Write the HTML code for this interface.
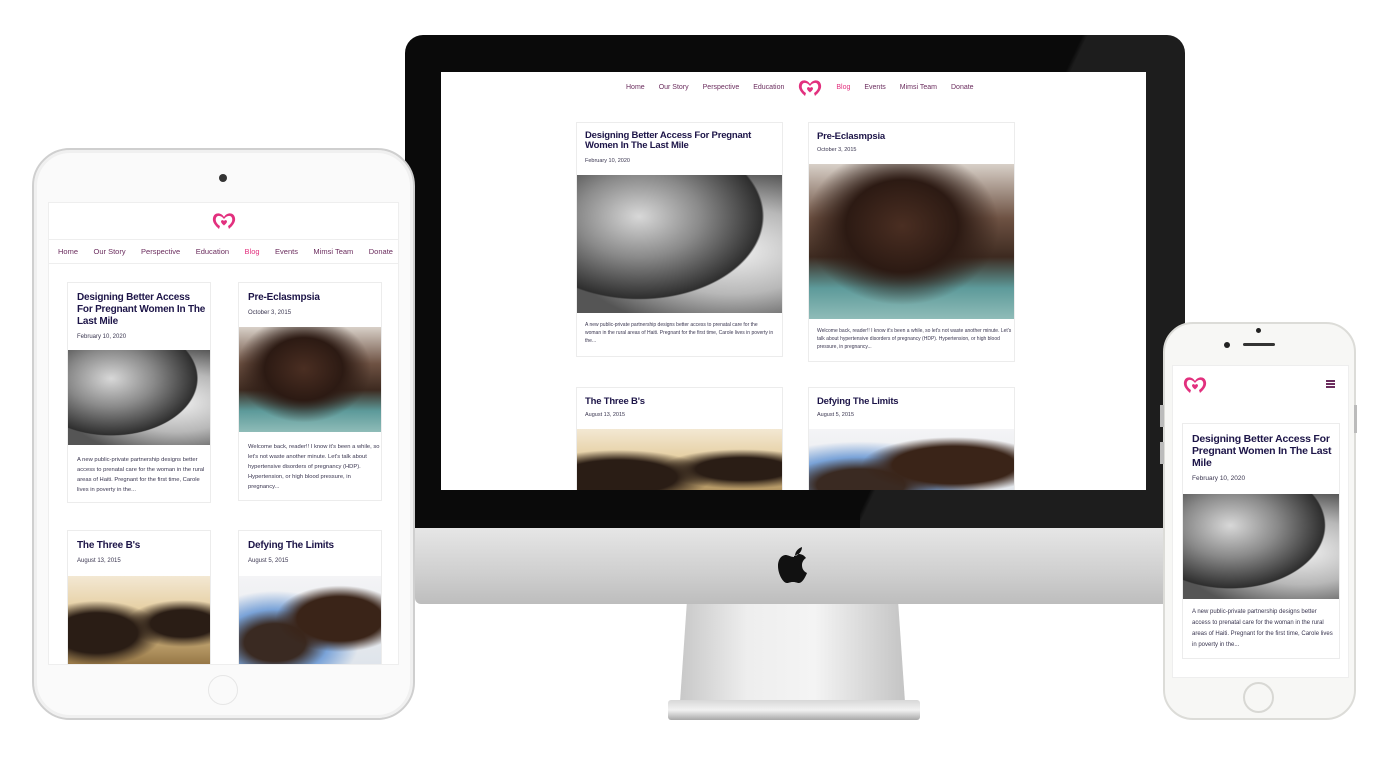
<!DOCTYPE html>
<html><head><meta charset="utf-8"><style>
*{margin:0;padding:0;box-sizing:border-box}
body{width:1382px;height:779px;background:#fff;position:relative;overflow:hidden;font-family:"Liberation Sans",sans-serif}
.a{position:absolute}
.card{position:absolute;background:#fff;border:1px solid #ececec;overflow:hidden}
.t{color:#1d1548;font-weight:bold;letter-spacing:-0.2px;font-family:"Liberation Sans Narrow","Liberation Sans",sans-serif}
.d{color:#3a3650}
.p{color:#3a3650}
.nav{position:absolute;display:flex;color:#6b2d5e;font-size:7px}
.pa{background:radial-gradient(ellipse at 30% 30%,#d8d8d8 0,#8a8a8a 30%,#2e2e2e 60%,transparent 61%),radial-gradient(ellipse at 75% 55%,#f0f0f0 0,#b8b8b8 40%,#555 75%),#777}
.pb{background:radial-gradient(ellipse at 45% 40%,#4a2e22 0,#2c1a13 35%,transparent 60%),linear-gradient(180deg,#d8d0c8 0,#6e5243 35%,#3d2a20 60%,#5d9a9a 80%,#8fbcb8 100%)}
.pc{background:radial-gradient(ellipse at 20% 60%,#2a1d15 0,#2a1d15 25%,transparent 40%),radial-gradient(ellipse at 80% 50%,#2a1d15 0,#2a1d15 20%,transparent 35%),linear-gradient(180deg,#f3e8d3,#e0c58f 50%,#8a6a3a)}
.pd{background:radial-gradient(ellipse at 70% 45%,#3a2418 0,#3a2418 30%,transparent 45%),radial-gradient(ellipse at 25% 70%,#3a2a22 0,#3a2a22 20%,#7aa3d8 35%,transparent 55%),linear-gradient(180deg,#f4f4f6,#dde3ea)}
</style></head><body>
<svg width="0" height="0" style="position:absolute"><defs><symbol id="lg" viewBox="0 0 24 18"><path d="M12 5C9 0 2 0 1 6c-1 5 4 9 6 11l1-3c-3-2-5-5-4-8 1-3 5-3 8 1 3-4 7-4 8-1 1 3-1 6-4 8l1 3c2-2 7-6 6-11-1-6-8-6-11-1z" fill="#e2307e"/><path d="M12 9c-1-1.5-3-1-3 .5 0 1.5 2 3 3 4 1-1 3-2.5 3-4 0-1.5-2-2-3-.5z" fill="#e2307e"/></symbol></defs></svg>

<!-- iMac -->
<div class="a" style="left:405px;top:35px;width:780px;height:495px;background:#0a0a0a;border-radius:18px 18px 0 0"></div>
<div class="a" style="left:860px;top:35px;width:325px;height:495px;background:linear-gradient(115deg,transparent 40%,rgba(255,255,255,.08) 41%);border-radius:0 18px 0 0"></div>
<div class="a" style="left:415px;top:528px;width:762px;height:76px;background:linear-gradient(180deg,#e6e6e6,#cfcfcf 60%,#bdbdbd);border-radius:0 0 6px 6px"></div>
<svg class="a" style="left:778px;top:545px" width="34" height="40" viewBox="0 0 34 40"><path d="M17 11c0-5 4-8 7-9 0 4-3 8-7 9zM16 12c-3 0-6-2-8-2-5 0-8 5-8 11 0 8 5 17 9 17 2 0 3-1 6-1s4 1 6 1c3 0 6-5 8-10-4-2-5-5-5-8 0-3 2-6 4-7-2-3-5-4-7-4-2 0-4 2-5 2z" fill="#111"/></svg>
<div class="a" style="left:680px;top:604px;width:225px;height:98px;background:linear-gradient(90deg,#c8c8c8,#eee 30%,#f4f4f4 60%,#c4c4c4);clip-path:polygon(3% 0,97% 0,100% 100%,0 100%)"></div>
<div class="a" style="left:668px;top:700px;width:252px;height:20px;background:linear-gradient(180deg,#d8d8d8,#f2f2f2 50%,#a8a8a8);border-radius:3px"></div>
<div class="a" style="left:441px;top:72px;width:705px;height:418px;background:#fff;overflow:hidden">
 <div class="nav" style="left:185px;top:12px;gap:14px"><span>Home</span><span>Our Story</span><span>Perspective</span><span>Education</span><svg width="24" height="18" style="margin-top:-5px"><use href="#lg"/></svg><span style="color:#e2307e">Blog</span><span>Events</span><span>Mimsi Team</span><span>Donate</span></div>
 <div class="card" style="left:135px;top:50px;width:207px;height:235px">
  <div class="t a" style="left:8px;top:8px;font-size:9.5px;line-height:10px;width:195px">Designing Better Access For Pregnant Women In The Last Mile</div>
  <div class="d a" style="left:8px;top:35px;font-size:5.5px">February 10, 2020</div>
  <div class="a pa" style="left:0;top:52px;width:207px;height:138px"></div>
  <div class="p a" style="left:8px;top:198px;font-size:5px;line-height:8px;width:190px">A new public-private partnership designs better access to prenatal care for the woman in the rural areas of Haiti. Pregnant for the first time, Carole lives in poverty in the...</div>
 </div>
 <div class="card" style="left:367px;top:50px;width:207px;height:240px">
  <div class="t a" style="left:8px;top:8px;font-size:9.5px">Pre-Eclasmpsia</div>
  <div class="d a" style="left:8px;top:24px;font-size:5.5px">October 3, 2015</div>
  <div class="a pb" style="left:0;top:41px;width:207px;height:155px"></div>
  <div class="p a" style="left:8px;top:204px;font-size:5px;line-height:8px;width:195px">Welcome back, reader!! I know it's been a while, so let's not waste another minute. Let's talk about hypertensive disorders of pregnancy (HDP). Hypertension, or high blood pressure, in pregnancy...</div>
 </div>
 <div class="card" style="left:135px;top:315px;width:207px;height:120px">
  <div class="t a" style="left:8px;top:8px;font-size:9.5px">The Three B's</div>
  <div class="d a" style="left:8px;top:24px;font-size:5.5px">August 13, 2015</div>
  <div class="a pc" style="left:0;top:41px;width:207px;height:80px"></div>
 </div>
 <div class="card" style="left:367px;top:315px;width:207px;height:120px">
  <div class="t a" style="left:8px;top:8px;font-size:9.5px">Defying The Limits</div>
  <div class="d a" style="left:8px;top:24px;font-size:5.5px">August 5, 2015</div>
  <div class="a pd" style="left:0;top:41px;width:207px;height:80px"></div>
 </div>
</div>

<!-- iPad -->
<div class="a" style="left:32px;top:148px;width:383px;height:572px;background:#fafafa;border:2px solid #cfcfcf;border-radius:38px;box-shadow:inset 0 0 0 3px #f0f0f0"></div>
<div class="a" style="left:219px;top:174px;width:8px;height:8px;border-radius:50%;background:#333"></div>
<div class="a" style="left:208px;top:675px;width:30px;height:30px;border-radius:50%;border:1px solid #e6e6e6"></div>
<div class="a" style="left:48px;top:202px;width:351px;height:463px;background:#fff;overflow:hidden;border:1px solid #eee">
 <svg class="a" style="left:163px;top:9px" width="24" height="18"><use href="#lg"/></svg>
 <div class="a" style="left:0;top:36px;width:351px;height:1px;background:#eee"></div>
 <div class="a" style="left:0;top:60px;width:351px;height:1px;background:#eee"></div>
 <div class="nav" style="left:9px;top:44px;gap:0;width:335px;justify-content:space-between;font-size:7.5px"><span>Home</span><span>Our Story</span><span>Perspective</span><span>Education</span><span style="color:#e2307e">Blog</span><span>Events</span><span>Mimsi Team</span><span>Donate</span></div>
 <div class="card" style="left:18px;top:79px;width:144px;height:221px">
  <div class="t a" style="left:9px;top:9px;font-size:10px;line-height:12px;width:130px">Designing Better Access For Pregnant Women In The Last Mile</div>
  <div class="d a" style="left:9px;top:51px;font-size:6px">February 10, 2020</div>
  <div class="a pa" style="left:0;top:67px;width:144px;height:95px"></div>
  <div class="p a" style="left:9px;top:172px;font-size:5.8px;line-height:10px;width:130px">A new public-private partnership designs better access to prenatal care for the woman in the rural areas of Haiti. Pregnant for the first time, Carole lives in poverty in the...</div>
 </div>
 <div class="card" style="left:189px;top:79px;width:144px;height:219px">
  <div class="t a" style="left:9px;top:9px;font-size:10px">Pre-Eclasmpsia</div>
  <div class="d a" style="left:9px;top:27px;font-size:6px">October 3, 2015</div>
  <div class="a pb" style="left:0;top:44px;width:144px;height:105px"></div>
  <div class="p a" style="left:9px;top:159px;font-size:5.8px;line-height:10px;width:132px">Welcome back, reader!! I know it's been a while, so let's not waste another minute. Let's talk about hypertensive disorders of pregnancy (HDP). Hypertension, or high blood pressure, in pregnancy...</div>
 </div>
 <div class="card" style="left:18px;top:327px;width:144px;height:140px">
  <div class="t a" style="left:9px;top:9px;font-size:10px">The Three B's</div>
  <div class="d a" style="left:9px;top:27px;font-size:6px">August 13, 2015</div>
  <div class="a pc" style="left:0;top:45px;width:144px;height:95px"></div>
 </div>
 <div class="card" style="left:189px;top:327px;width:144px;height:140px">
  <div class="t a" style="left:9px;top:9px;font-size:10px">Defying The Limits</div>
  <div class="d a" style="left:9px;top:27px;font-size:6px">August 5, 2015</div>
  <div class="a pd" style="left:0;top:45px;width:144px;height:95px"></div>
 </div>
</div>

<!-- iPhone -->
<div class="a" style="left:1163px;top:322px;width:193px;height:398px;background:#f7f7f5;border:2px solid #dcdcd8;border-radius:30px"></div>
<div class="a" style="left:1160px;top:405px;width:4px;height:22px;background:#bbb"></div>
<div class="a" style="left:1160px;top:442px;width:4px;height:22px;background:#bbb"></div>
<div class="a" style="left:1354px;top:405px;width:3px;height:28px;background:#bbb"></div>
<div class="a" style="left:1256px;top:328px;width:5px;height:5px;border-radius:50%;background:#222"></div>
<div class="a" style="left:1224px;top:342px;width:6px;height:6px;border-radius:50%;background:#222"></div>
<div class="a" style="left:1243px;top:343px;width:32px;height:3px;border-radius:2px;background:#333"></div>
<div class="a" style="left:1243px;top:682px;width:31px;height:31px;border-radius:50%;border:2px solid #d8d8d4"></div>
<div class="a" style="left:1172px;top:365px;width:177px;height:313px;background:#fff;overflow:hidden;border:1px solid #eee">
 <svg class="a" style="left:10px;top:10px" width="24" height="18"><use href="#lg"/></svg>
 <div class="a" style="left:153px;top:14px;width:9px;height:2px;background:#6b2d5e;box-shadow:0 3px 0 #6b2d5e,0 6px 0 #6b2d5e"></div>
 <div class="card" style="left:9px;top:57px;width:158px;height:236px">
  <div class="t a" style="left:9px;top:9px;font-size:10.5px;line-height:12px;width:145px">Designing Better Access For Pregnant Women In The Last Mile</div>
  <div class="d a" style="left:9px;top:51px;font-size:6.5px">February 10, 2020</div>
  <div class="a pa" style="left:0;top:70px;width:158px;height:105px"></div>
  <div class="p a" style="left:9px;top:183px;font-size:6px;line-height:11px;width:145px">A new public-private partnership designs better access to prenatal care for the woman in the rural areas of Haiti. Pregnant for the first time, Carole lives in poverty in the...</div>
 </div>
</div>
</body></html>
